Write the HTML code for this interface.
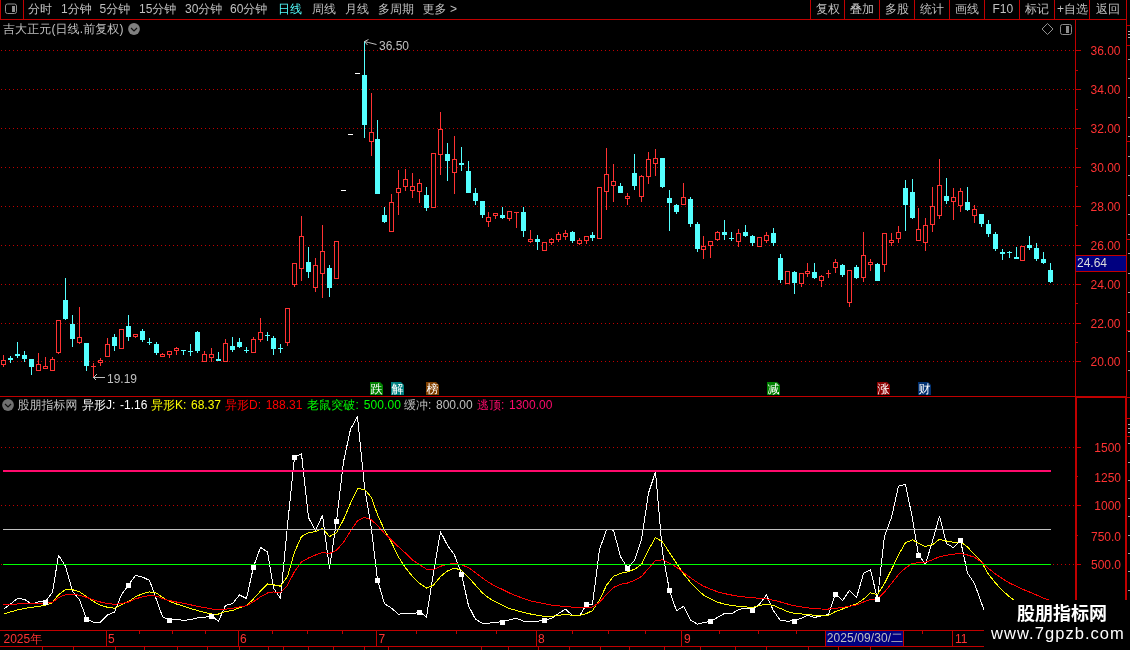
<!DOCTYPE html>
<html lang="zh-CN"><head><meta charset="utf-8"><title>吉大正元 日线</title>
<style>
html,body{margin:0;padding:0;background:#000;}
body{width:1130px;height:650px;overflow:hidden;position:relative;font-family:"Liberation Sans","Noto Sans CJK SC",sans-serif;font-size:12px;}
svg{position:absolute;left:0;top:0;}
.t{position:absolute;white-space:nowrap;line-height:14px;height:14px;font-size:12px;font-family:"Liberation Sans","WenQuanYi Zen Hei",sans-serif;}
.tag{font-family:"Liberation Sans","WenQuanYi Zen Hei",sans-serif;position:absolute;width:13px;height:13px;line-height:15px;font-size:12px;color:#fff;text-align:center;overflow:hidden;}
.tag:after{content:"";position:absolute;right:0;top:0;border-left:3px solid transparent;border-top:3px solid #000;}
.wm{font-family:"Liberation Sans","Noto Sans CJK SC",sans-serif;position:absolute;left:984px;top:600px;width:146px;height:50px;background:#000;color:#fff;text-align:center;}
.wm b{position:absolute;left:0;width:146px;top:2px;font-size:18px;line-height:24px;font-weight:bold;padding-left:10px;box-sizing:border-box;}
.wm i{position:absolute;left:1px;width:146px;top:23px;font-style:normal;font-size:16.5px;line-height:20px;letter-spacing:1.05px;}
</style></head><body>
<svg width="1130" height="650" viewBox="0 0 1130 650" shape-rendering="crispEdges">
<line x1="1" y1="50.5" x2="1075" y2="50.5" stroke="#c00000" stroke-width="1" stroke-dasharray="1 3"/>
<line x1="1" y1="89.5" x2="1075" y2="89.5" stroke="#c00000" stroke-width="1" stroke-dasharray="1 3"/>
<line x1="1" y1="128.5" x2="1075" y2="128.5" stroke="#c00000" stroke-width="1" stroke-dasharray="1 3"/>
<line x1="1" y1="167.5" x2="1075" y2="167.5" stroke="#c00000" stroke-width="1" stroke-dasharray="1 3"/>
<line x1="1" y1="206.5" x2="1075" y2="206.5" stroke="#c00000" stroke-width="1" stroke-dasharray="1 3"/>
<line x1="1" y1="245.5" x2="1075" y2="245.5" stroke="#c00000" stroke-width="1" stroke-dasharray="1 3"/>
<line x1="1" y1="284.5" x2="1075" y2="284.5" stroke="#c00000" stroke-width="1" stroke-dasharray="1 3"/>
<line x1="1" y1="323.5" x2="1075" y2="323.5" stroke="#c00000" stroke-width="1" stroke-dasharray="1 3"/>
<line x1="1" y1="361.5" x2="1075" y2="361.5" stroke="#c00000" stroke-width="1" stroke-dasharray="1 3"/>
<line x1="1" y1="447.5" x2="1075" y2="447.5" stroke="#c00000" stroke-width="1" stroke-dasharray="1 3"/>
<line x1="1" y1="505.5" x2="1075" y2="505.5" stroke="#c00000" stroke-width="1" stroke-dasharray="1 3"/>
<line x1="1" y1="564.5" x2="1075" y2="564.5" stroke="#c00000" stroke-width="1" stroke-dasharray="1 3"/>
<rect x="0" y="19" width="1127" height="1" fill="#c00000"/>
<rect x="0" y="0" width="1" height="20" fill="#c00000"/>
<rect x="23" y="0" width="1" height="20" fill="#c00000"/>
<rect x="810" y="0" width="1" height="20" fill="#c00000"/>
<rect x="844" y="0" width="1" height="20" fill="#c00000"/>
<rect x="879" y="0" width="1" height="20" fill="#c00000"/>
<rect x="914" y="0" width="1" height="20" fill="#c00000"/>
<rect x="949" y="0" width="1" height="20" fill="#c00000"/>
<rect x="984" y="0" width="1" height="20" fill="#c00000"/>
<rect x="1019" y="0" width="1" height="20" fill="#c00000"/>
<rect x="1054" y="0" width="1" height="20" fill="#c00000"/>
<rect x="1089" y="0" width="1" height="20" fill="#c00000"/>
<rect x="1126" y="0" width="1" height="397" fill="#c00000"/>
<rect x="1075" y="20" width="1" height="377" fill="#c00000"/>
<rect x="0" y="396" width="1127" height="1" fill="#c00000"/>
<rect x="1075" y="397" width="52" height="1" fill="#c00000"/>
<rect x="1075" y="396" width="2" height="235" fill="#c00000"/>
<rect x="1125" y="396" width="2" height="235" fill="#c00000"/>
<rect x="0" y="630" width="1127" height="1" fill="#c00000"/>
<rect x="0" y="646" width="1127" height="1" fill="#c00000"/>
<rect x="1127" y="25" width="3" height="1" fill="#c00000"/>
<rect x="1127" y="45" width="3" height="1" fill="#c00000"/>
<rect x="1127" y="141" width="3" height="1" fill="#c00000"/>
<rect x="1127" y="239" width="3" height="1" fill="#c00000"/>
<rect x="1127" y="330" width="3" height="1" fill="#c00000"/>
<rect x="1127" y="397" width="3" height="1" fill="#c00000"/>
<rect x="1127" y="418" width="3" height="1" fill="#c00000"/>
<rect x="1127" y="436" width="3" height="1" fill="#c00000"/>
<rect x="1128" y="31" width="2" height="1" fill="#b0b0b0"/>
<rect x="1128" y="34" width="2" height="1" fill="#b0b0b0"/>
<rect x="1128" y="37" width="2" height="1" fill="#b0b0b0"/>
<rect x="1128" y="59" width="2" height="1" fill="#a0a0a0"/>
<rect x="1128" y="78" width="2" height="1" fill="#a0a0a0"/>
<rect x="1128" y="97" width="2" height="1" fill="#a0a0a0"/>
<rect x="1128" y="117" width="2" height="1" fill="#a0a0a0"/>
<rect x="1128" y="136" width="2" height="1" fill="#a0a0a0"/>
<rect x="1128" y="156" width="2" height="1" fill="#a0a0a0"/>
<rect x="1128" y="175" width="2" height="1" fill="#a0a0a0"/>
<rect x="1128" y="195" width="2" height="1" fill="#a0a0a0"/>
<rect x="1128" y="214" width="2" height="1" fill="#a0a0a0"/>
<rect x="1128" y="234" width="2" height="1" fill="#a0a0a0"/>
<rect x="1128" y="253" width="2" height="1" fill="#a0a0a0"/>
<rect x="1128" y="273" width="2" height="1" fill="#a0a0a0"/>
<rect x="1128" y="292" width="2" height="1" fill="#a0a0a0"/>
<rect x="1128" y="312" width="2" height="1" fill="#a0a0a0"/>
<rect x="1128" y="331" width="2" height="1" fill="#a0a0a0"/>
<rect x="1128" y="351" width="2" height="1" fill="#a0a0a0"/>
<rect x="1128" y="370" width="2" height="1" fill="#a0a0a0"/>
<rect x="1128" y="424" width="2" height="1" fill="#b0b0b0"/>
<rect x="1128" y="428" width="2" height="1" fill="#b0b0b0"/>
<rect x="1128" y="432" width="2" height="1" fill="#b0b0b0"/>
<rect x="1128" y="443" width="2" height="1" fill="#a0a0a0"/>
<rect x="1128" y="462" width="2" height="1" fill="#a0a0a0"/>
<rect x="1128" y="480" width="2" height="1" fill="#a0a0a0"/>
<rect x="1128" y="498" width="2" height="1" fill="#a0a0a0"/>
<rect x="1128" y="516" width="2" height="1" fill="#a0a0a0"/>
<rect x="1128" y="535" width="2" height="1" fill="#a0a0a0"/>
<rect x="1128" y="553" width="2" height="1" fill="#a0a0a0"/>
<rect x="1128" y="571" width="2" height="1" fill="#a0a0a0"/>
<rect x="1128" y="590" width="2" height="1" fill="#a0a0a0"/>
<rect x="1076" y="50" width="5" height="1" fill="#c00000"/>
<rect x="1076" y="70" width="2" height="1" fill="#c00000"/>
<rect x="1076" y="89" width="5" height="1" fill="#c00000"/>
<rect x="1076" y="109" width="2" height="1" fill="#c00000"/>
<rect x="1076" y="128" width="5" height="1" fill="#c00000"/>
<rect x="1076" y="148" width="2" height="1" fill="#c00000"/>
<rect x="1076" y="167" width="5" height="1" fill="#c00000"/>
<rect x="1076" y="186" width="2" height="1" fill="#c00000"/>
<rect x="1076" y="206" width="5" height="1" fill="#c00000"/>
<rect x="1076" y="225" width="2" height="1" fill="#c00000"/>
<rect x="1076" y="245" width="5" height="1" fill="#c00000"/>
<rect x="1076" y="264" width="2" height="1" fill="#c00000"/>
<rect x="1076" y="284" width="5" height="1" fill="#c00000"/>
<rect x="1076" y="303" width="2" height="1" fill="#c00000"/>
<rect x="1076" y="323" width="5" height="1" fill="#c00000"/>
<rect x="1076" y="342" width="2" height="1" fill="#c00000"/>
<rect x="1076" y="361" width="5" height="1" fill="#c00000"/>
<rect x="1077" y="564" width="4" height="1" fill="#c00000"/>
<rect x="1077" y="535" width="1" height="1" fill="#c00000"/>
<rect x="1077" y="505" width="4" height="1" fill="#c00000"/>
<rect x="1077" y="476" width="1" height="1" fill="#c00000"/>
<rect x="1077" y="447" width="4" height="1" fill="#c00000"/>
<rect x="106" y="630" width="1" height="17" fill="#c00000"/>
<rect x="238" y="630" width="1" height="17" fill="#c00000"/>
<rect x="376" y="630" width="1" height="17" fill="#c00000"/>
<rect x="536" y="630" width="1" height="17" fill="#c00000"/>
<rect x="681" y="630" width="1" height="17" fill="#c00000"/>
<rect x="834" y="630" width="1" height="17" fill="#c00000"/>
<rect x="952" y="630" width="1" height="17" fill="#c00000"/>
<rect x="139" y="630" width="1" height="4" fill="#c00000"/>
<rect x="172" y="630" width="1" height="4" fill="#c00000"/>
<rect x="205" y="630" width="1" height="4" fill="#c00000"/>
<rect x="272" y="630" width="1" height="4" fill="#c00000"/>
<rect x="307" y="630" width="1" height="4" fill="#c00000"/>
<rect x="342" y="630" width="1" height="4" fill="#c00000"/>
<rect x="416" y="630" width="1" height="4" fill="#c00000"/>
<rect x="456" y="630" width="1" height="4" fill="#c00000"/>
<rect x="496" y="630" width="1" height="4" fill="#c00000"/>
<rect x="572" y="630" width="1" height="4" fill="#c00000"/>
<rect x="608" y="630" width="1" height="4" fill="#c00000"/>
<rect x="645" y="630" width="1" height="4" fill="#c00000"/>
<rect x="719" y="630" width="1" height="4" fill="#c00000"/>
<rect x="758" y="630" width="1" height="4" fill="#c00000"/>
<rect x="796" y="630" width="1" height="4" fill="#c00000"/>
<rect x="864" y="630" width="1" height="4" fill="#c00000"/>
<rect x="893" y="630" width="1" height="4" fill="#c00000"/>
<rect x="922" y="630" width="1" height="4" fill="#c00000"/>
<rect x="42" y="646" width="1" height="4" fill="#c00000"/>
<rect x="73" y="646" width="1" height="4" fill="#c00000"/>
<rect x="115" y="646" width="1" height="4" fill="#c00000"/>
<rect x="144" y="646" width="1" height="4" fill="#c00000"/>
<rect x="177" y="646" width="1" height="4" fill="#c00000"/>
<rect x="207" y="646" width="1" height="4" fill="#c00000"/>
<rect x="239" y="646" width="1" height="4" fill="#c00000"/>
<rect x="268" y="646" width="1" height="4" fill="#c00000"/>
<rect x="283" y="646" width="1" height="4" fill="#c00000"/>
<rect x="308" y="646" width="1" height="4" fill="#c00000"/>
<rect x="333" y="646" width="1" height="4" fill="#c00000"/>
<rect x="364" y="646" width="1" height="4" fill="#c00000"/>
<rect x="388" y="646" width="1" height="4" fill="#c00000"/>
<rect x="481" y="646" width="1" height="4" fill="#c00000"/>
<rect x="508" y="646" width="1" height="4" fill="#c00000"/>
<rect x="538" y="646" width="1" height="4" fill="#c00000"/>
<rect x="569" y="646" width="1" height="4" fill="#c00000"/>
<rect x="600" y="646" width="1" height="4" fill="#c00000"/>
<rect x="629" y="646" width="1" height="4" fill="#c00000"/>
<rect x="664" y="646" width="1" height="4" fill="#c00000"/>
<rect x="700" y="646" width="1" height="4" fill="#c00000"/>
<rect x="735" y="646" width="1" height="4" fill="#c00000"/>
<rect x="766" y="646" width="1" height="4" fill="#c00000"/>
<rect x="808" y="646" width="1" height="4" fill="#c00000"/>
<rect x="838" y="646" width="1" height="4" fill="#c00000"/>
<rect x="870" y="646" width="1" height="4" fill="#c00000"/>
<rect x="3" y="355" width="1" height="5" fill="#ff3232"/>
<rect x="3" y="365" width="1" height="2" fill="#ff3232"/>
<rect x="1.5" y="360.5" width="4" height="4" fill="#000" stroke="#ff3232" stroke-width="1"/>
<rect x="10" y="356" width="1" height="7" fill="#54ffff"/>
<rect x="8" y="358" width="5" height="2" fill="#54ffff"/>
<rect x="17" y="342" width="1" height="16" fill="#54ffff"/>
<rect x="15" y="354" width="5" height="2" fill="#54ffff"/>
<rect x="24" y="351" width="1" height="11" fill="#54ffff"/>
<rect x="22" y="355" width="5" height="4" fill="#54ffff"/>
<rect x="31" y="359" width="1" height="16" fill="#54ffff"/>
<rect x="29" y="359" width="5" height="8" fill="#54ffff"/>
<rect x="38" y="353" width="1" height="11" fill="#ff3232"/>
<rect x="36.5" y="364.5" width="4" height="6" fill="#000" stroke="#ff3232" stroke-width="1"/>
<rect x="45" y="357" width="1" height="9" fill="#ff3232"/>
<rect x="43.5" y="366.5" width="4" height="2" fill="#000" stroke="#ff3232" stroke-width="1"/>
<rect x="52" y="357" width="1" height="2" fill="#ff3232"/>
<rect x="50.5" y="359.5" width="4" height="11" fill="#000" stroke="#ff3232" stroke-width="1"/>
<rect x="58" y="353" width="1" height="1" fill="#ff3232"/>
<rect x="56.5" y="320.5" width="4" height="32" fill="#000" stroke="#ff3232" stroke-width="1"/>
<rect x="65" y="278" width="1" height="42" fill="#54ffff"/>
<rect x="63" y="300" width="5" height="19" fill="#54ffff"/>
<rect x="72" y="315" width="1" height="32" fill="#54ffff"/>
<rect x="70" y="324" width="5" height="15" fill="#54ffff"/>
<rect x="79" y="307" width="1" height="30" fill="#ff3232"/>
<rect x="79" y="343" width="1" height="1" fill="#ff3232"/>
<rect x="77.5" y="337.5" width="4" height="5" fill="#000" stroke="#ff3232" stroke-width="1"/>
<rect x="86" y="343" width="1" height="28" fill="#54ffff"/>
<rect x="84" y="343" width="5" height="23" fill="#54ffff"/>
<rect x="93" y="363" width="1" height="3" fill="#ff3232"/>
<rect x="93" y="367" width="1" height="10" fill="#ff3232"/>
<rect x="91" y="366" width="5" height="1" fill="#ff3232"/>
<rect x="100" y="358" width="1" height="2" fill="#ff3232"/>
<rect x="100" y="363" width="1" height="3" fill="#ff3232"/>
<rect x="98.5" y="360.5" width="4" height="2" fill="#000" stroke="#ff3232" stroke-width="1"/>
<rect x="107" y="338" width="1" height="6" fill="#ff3232"/>
<rect x="105.5" y="344.5" width="4" height="12" fill="#000" stroke="#ff3232" stroke-width="1"/>
<rect x="114" y="334" width="1" height="17" fill="#54ffff"/>
<rect x="112" y="337" width="5" height="9" fill="#54ffff"/>
<rect x="119.5" y="329.5" width="4" height="19" fill="#000" stroke="#ff3232" stroke-width="1"/>
<rect x="128" y="315" width="1" height="26" fill="#54ffff"/>
<rect x="126" y="326" width="5" height="11" fill="#54ffff"/>
<rect x="135" y="337" width="1" height="1" fill="#ff3232"/>
<rect x="133.5" y="334.5" width="4" height="2" fill="#000" stroke="#ff3232" stroke-width="1"/>
<rect x="142" y="329" width="1" height="13" fill="#54ffff"/>
<rect x="140" y="331" width="5" height="9" fill="#54ffff"/>
<rect x="149" y="338" width="1" height="7" fill="#54ffff"/>
<rect x="147" y="342" width="5" height="1" fill="#54ffff"/>
<rect x="156" y="342" width="1" height="13" fill="#54ffff"/>
<rect x="154" y="344" width="5" height="9" fill="#54ffff"/>
<rect x="162" y="353" width="1" height="1" fill="#ff3232"/>
<rect x="160.5" y="354.5" width="4" height="2" fill="#000" stroke="#ff3232" stroke-width="1"/>
<rect x="169" y="355" width="1" height="3" fill="#ff3232"/>
<rect x="167.5" y="351.5" width="4" height="3" fill="#000" stroke="#ff3232" stroke-width="1"/>
<rect x="176" y="347" width="1" height="1" fill="#ff3232"/>
<rect x="176" y="351" width="1" height="4" fill="#ff3232"/>
<rect x="174.5" y="348.5" width="4" height="2" fill="#000" stroke="#ff3232" stroke-width="1"/>
<rect x="183" y="350" width="1" height="5" fill="#54ffff"/>
<rect x="181" y="350" width="5" height="1" fill="#54ffff"/>
<rect x="190" y="344" width="1" height="12" fill="#54ffff"/>
<rect x="188" y="351" width="5" height="1" fill="#54ffff"/>
<rect x="197" y="331" width="1" height="22" fill="#54ffff"/>
<rect x="195" y="332" width="5" height="19" fill="#54ffff"/>
<rect x="204" y="351" width="1" height="3" fill="#ff3232"/>
<rect x="202.5" y="354.5" width="4" height="7" fill="#000" stroke="#ff3232" stroke-width="1"/>
<rect x="211" y="348" width="1" height="6" fill="#ff3232"/>
<rect x="211" y="358" width="1" height="4" fill="#ff3232"/>
<rect x="209.5" y="354.5" width="4" height="3" fill="#000" stroke="#ff3232" stroke-width="1"/>
<rect x="218" y="352" width="1" height="9" fill="#54ffff"/>
<rect x="216" y="359" width="5" height="2" fill="#54ffff"/>
<rect x="225" y="339" width="1" height="4" fill="#ff3232"/>
<rect x="223.5" y="343.5" width="4" height="18" fill="#000" stroke="#ff3232" stroke-width="1"/>
<rect x="232" y="337" width="1" height="15" fill="#54ffff"/>
<rect x="230" y="346" width="5" height="4" fill="#54ffff"/>
<rect x="239" y="338" width="1" height="10" fill="#54ffff"/>
<rect x="237" y="342" width="5" height="5" fill="#54ffff"/>
<rect x="246" y="347" width="1" height="6" fill="#54ffff"/>
<rect x="244" y="350" width="5" height="1" fill="#54ffff"/>
<rect x="253" y="337" width="1" height="2" fill="#ff3232"/>
<rect x="251.5" y="339.5" width="4" height="13" fill="#000" stroke="#ff3232" stroke-width="1"/>
<rect x="260" y="318" width="1" height="14" fill="#ff3232"/>
<rect x="260" y="340" width="1" height="2" fill="#ff3232"/>
<rect x="258.5" y="332.5" width="4" height="7" fill="#000" stroke="#ff3232" stroke-width="1"/>
<rect x="267" y="332" width="1" height="9" fill="#54ffff"/>
<rect x="265" y="335" width="5" height="1" fill="#54ffff"/>
<rect x="273" y="336" width="1" height="19" fill="#54ffff"/>
<rect x="271" y="338" width="5" height="11" fill="#54ffff"/>
<rect x="280" y="344" width="1" height="9" fill="#54ffff"/>
<rect x="278" y="348" width="5" height="1" fill="#54ffff"/>
<rect x="287" y="343" width="1" height="3" fill="#ff3232"/>
<rect x="285.5" y="308.5" width="4" height="34" fill="#000" stroke="#ff3232" stroke-width="1"/>
<rect x="294" y="285" width="1" height="2" fill="#ff3232"/>
<rect x="292.5" y="263.5" width="4" height="21" fill="#000" stroke="#ff3232" stroke-width="1"/>
<rect x="301" y="216" width="1" height="20" fill="#ff3232"/>
<rect x="301" y="269" width="1" height="12" fill="#ff3232"/>
<rect x="299.5" y="236.5" width="4" height="32" fill="#000" stroke="#ff3232" stroke-width="1"/>
<rect x="308" y="247" width="1" height="31" fill="#54ffff"/>
<rect x="306" y="262" width="5" height="10" fill="#54ffff"/>
<rect x="315" y="258" width="1" height="7" fill="#ff3232"/>
<rect x="315" y="288" width="1" height="4" fill="#ff3232"/>
<rect x="313.5" y="265.5" width="4" height="22" fill="#000" stroke="#ff3232" stroke-width="1"/>
<rect x="322" y="225" width="1" height="26" fill="#ff3232"/>
<rect x="322" y="274" width="1" height="24" fill="#ff3232"/>
<rect x="320.5" y="251.5" width="4" height="22" fill="#000" stroke="#ff3232" stroke-width="1"/>
<rect x="329" y="265" width="1" height="32" fill="#54ffff"/>
<rect x="327" y="268" width="5" height="20" fill="#54ffff"/>
<rect x="334.5" y="241.5" width="4" height="37" fill="#000" stroke="#ff3232" stroke-width="1"/>
<rect x="364" y="41" width="1" height="97" fill="#54ffff"/>
<rect x="362" y="75" width="5" height="50" fill="#54ffff"/>
<rect x="371" y="93" width="1" height="39" fill="#ff3232"/>
<rect x="371" y="142" width="1" height="14" fill="#ff3232"/>
<rect x="369.5" y="132.5" width="4" height="9" fill="#000" stroke="#ff3232" stroke-width="1"/>
<rect x="377" y="120" width="1" height="74" fill="#54ffff"/>
<rect x="375" y="139" width="5" height="55" fill="#54ffff"/>
<rect x="384" y="207" width="1" height="16" fill="#54ffff"/>
<rect x="382" y="215" width="5" height="7" fill="#54ffff"/>
<rect x="391" y="194" width="1" height="8" fill="#ff3232"/>
<rect x="389.5" y="202.5" width="4" height="29" fill="#000" stroke="#ff3232" stroke-width="1"/>
<rect x="398" y="170" width="1" height="18" fill="#ff3232"/>
<rect x="398" y="193" width="1" height="22" fill="#ff3232"/>
<rect x="396.5" y="188.5" width="4" height="4" fill="#000" stroke="#ff3232" stroke-width="1"/>
<rect x="405" y="169" width="1" height="10" fill="#ff3232"/>
<rect x="405" y="187" width="1" height="4" fill="#ff3232"/>
<rect x="403.5" y="179.5" width="4" height="7" fill="#000" stroke="#ff3232" stroke-width="1"/>
<rect x="412" y="173" width="1" height="13" fill="#ff3232"/>
<rect x="412" y="191" width="1" height="7" fill="#ff3232"/>
<rect x="410.5" y="186.5" width="4" height="4" fill="#000" stroke="#ff3232" stroke-width="1"/>
<rect x="419" y="179" width="1" height="4" fill="#ff3232"/>
<rect x="419" y="192" width="1" height="11" fill="#ff3232"/>
<rect x="417.5" y="183.5" width="4" height="8" fill="#000" stroke="#ff3232" stroke-width="1"/>
<rect x="426" y="187" width="1" height="24" fill="#54ffff"/>
<rect x="424" y="195" width="5" height="13" fill="#54ffff"/>
<rect x="431.5" y="153.5" width="4" height="54" fill="#000" stroke="#ff3232" stroke-width="1"/>
<rect x="440" y="112" width="1" height="17" fill="#ff3232"/>
<rect x="440" y="155" width="1" height="20" fill="#ff3232"/>
<rect x="438.5" y="129.5" width="4" height="25" fill="#000" stroke="#ff3232" stroke-width="1"/>
<rect x="447" y="143" width="1" height="38" fill="#54ffff"/>
<rect x="445" y="154" width="5" height="7" fill="#54ffff"/>
<rect x="454" y="136" width="1" height="23" fill="#ff3232"/>
<rect x="454" y="173" width="1" height="21" fill="#ff3232"/>
<rect x="452.5" y="159.5" width="4" height="13" fill="#000" stroke="#ff3232" stroke-width="1"/>
<rect x="461" y="147" width="1" height="24" fill="#54ffff"/>
<rect x="459" y="163" width="5" height="2" fill="#54ffff"/>
<rect x="468" y="161" width="1" height="32" fill="#54ffff"/>
<rect x="466" y="171" width="5" height="22" fill="#54ffff"/>
<rect x="475" y="188" width="1" height="17" fill="#54ffff"/>
<rect x="473" y="193" width="5" height="8" fill="#54ffff"/>
<rect x="482" y="201" width="1" height="17" fill="#54ffff"/>
<rect x="480" y="201" width="5" height="14" fill="#54ffff"/>
<rect x="488" y="212" width="1" height="5" fill="#ff3232"/>
<rect x="488" y="222" width="1" height="5" fill="#ff3232"/>
<rect x="486.5" y="217.5" width="4" height="4" fill="#000" stroke="#ff3232" stroke-width="1"/>
<rect x="495" y="216" width="1" height="3" fill="#ff3232"/>
<rect x="493.5" y="213.5" width="4" height="2" fill="#000" stroke="#ff3232" stroke-width="1"/>
<rect x="502" y="207" width="1" height="12" fill="#54ffff"/>
<rect x="500" y="215" width="5" height="3" fill="#54ffff"/>
<rect x="509" y="219" width="1" height="2" fill="#ff3232"/>
<rect x="507.5" y="211.5" width="4" height="7" fill="#000" stroke="#ff3232" stroke-width="1"/>
<rect x="516" y="213" width="1" height="15" fill="#ff3232"/>
<rect x="514" y="212" width="5" height="1" fill="#ff3232"/>
<rect x="523" y="207" width="1" height="30" fill="#54ffff"/>
<rect x="521" y="212" width="5" height="19" fill="#54ffff"/>
<rect x="530" y="230" width="1" height="9" fill="#ff3232"/>
<rect x="530" y="242" width="1" height="1" fill="#ff3232"/>
<rect x="528.5" y="239.5" width="4" height="2" fill="#000" stroke="#ff3232" stroke-width="1"/>
<rect x="537" y="235" width="1" height="15" fill="#54ffff"/>
<rect x="535" y="239" width="5" height="3" fill="#54ffff"/>
<rect x="542.5" y="242.5" width="4" height="8" fill="#000" stroke="#ff3232" stroke-width="1"/>
<rect x="551" y="238" width="1" height="1" fill="#ff3232"/>
<rect x="551" y="243" width="1" height="2" fill="#ff3232"/>
<rect x="549.5" y="239.5" width="4" height="3" fill="#000" stroke="#ff3232" stroke-width="1"/>
<rect x="558" y="232" width="1" height="2" fill="#ff3232"/>
<rect x="558" y="240" width="1" height="2" fill="#ff3232"/>
<rect x="556.5" y="234.5" width="4" height="5" fill="#000" stroke="#ff3232" stroke-width="1"/>
<rect x="565" y="230" width="1" height="3" fill="#ff3232"/>
<rect x="565" y="237" width="1" height="3" fill="#ff3232"/>
<rect x="563.5" y="233.5" width="4" height="3" fill="#000" stroke="#ff3232" stroke-width="1"/>
<rect x="572" y="231" width="1" height="12" fill="#54ffff"/>
<rect x="570" y="232" width="5" height="9" fill="#54ffff"/>
<rect x="579" y="238" width="1" height="2" fill="#ff3232"/>
<rect x="579" y="244" width="1" height="1" fill="#ff3232"/>
<rect x="577.5" y="240.5" width="4" height="3" fill="#000" stroke="#ff3232" stroke-width="1"/>
<rect x="586" y="241" width="1" height="3" fill="#ff3232"/>
<rect x="584.5" y="236.5" width="4" height="4" fill="#000" stroke="#ff3232" stroke-width="1"/>
<rect x="592" y="232" width="1" height="9" fill="#54ffff"/>
<rect x="590" y="235" width="5" height="3" fill="#54ffff"/>
<rect x="597.5" y="187.5" width="4" height="51" fill="#000" stroke="#ff3232" stroke-width="1"/>
<rect x="606" y="148" width="1" height="26" fill="#ff3232"/>
<rect x="606" y="192" width="1" height="18" fill="#ff3232"/>
<rect x="604.5" y="174.5" width="4" height="17" fill="#000" stroke="#ff3232" stroke-width="1"/>
<rect x="613" y="164" width="1" height="17" fill="#ff3232"/>
<rect x="613" y="186" width="1" height="16" fill="#ff3232"/>
<rect x="611.5" y="181.5" width="4" height="4" fill="#000" stroke="#ff3232" stroke-width="1"/>
<rect x="620" y="183" width="1" height="10" fill="#54ffff"/>
<rect x="618" y="186" width="5" height="7" fill="#54ffff"/>
<rect x="627" y="193" width="1" height="3" fill="#ff3232"/>
<rect x="627" y="199" width="1" height="6" fill="#ff3232"/>
<rect x="625.5" y="196.5" width="4" height="2" fill="#000" stroke="#ff3232" stroke-width="1"/>
<rect x="634" y="154" width="1" height="36" fill="#54ffff"/>
<rect x="632" y="173" width="5" height="13" fill="#54ffff"/>
<rect x="641" y="175" width="1" height="1" fill="#ff3232"/>
<rect x="641" y="197" width="1" height="5" fill="#ff3232"/>
<rect x="639.5" y="176.5" width="4" height="20" fill="#000" stroke="#ff3232" stroke-width="1"/>
<rect x="648" y="152" width="1" height="7" fill="#ff3232"/>
<rect x="648" y="177" width="1" height="7" fill="#ff3232"/>
<rect x="646.5" y="159.5" width="4" height="17" fill="#000" stroke="#ff3232" stroke-width="1"/>
<rect x="655" y="149" width="1" height="9" fill="#ff3232"/>
<rect x="655" y="164" width="1" height="12" fill="#ff3232"/>
<rect x="653.5" y="158.5" width="4" height="5" fill="#000" stroke="#ff3232" stroke-width="1"/>
<rect x="662" y="158" width="1" height="30" fill="#54ffff"/>
<rect x="660" y="158" width="5" height="29" fill="#54ffff"/>
<rect x="669" y="190" width="1" height="41" fill="#54ffff"/>
<rect x="667" y="198" width="5" height="5" fill="#54ffff"/>
<rect x="676" y="204" width="1" height="10" fill="#54ffff"/>
<rect x="674" y="205" width="5" height="7" fill="#54ffff"/>
<rect x="683" y="183" width="1" height="14" fill="#ff3232"/>
<rect x="681.5" y="197.5" width="4" height="7" fill="#000" stroke="#ff3232" stroke-width="1"/>
<rect x="690" y="197" width="1" height="30" fill="#54ffff"/>
<rect x="688" y="199" width="5" height="25" fill="#54ffff"/>
<rect x="697" y="222" width="1" height="30" fill="#54ffff"/>
<rect x="695" y="224" width="5" height="25" fill="#54ffff"/>
<rect x="703" y="236" width="1" height="10" fill="#ff3232"/>
<rect x="703" y="250" width="1" height="9" fill="#ff3232"/>
<rect x="701.5" y="246.5" width="4" height="3" fill="#000" stroke="#ff3232" stroke-width="1"/>
<rect x="710" y="246" width="1" height="12" fill="#ff3232"/>
<rect x="708.5" y="241.5" width="4" height="4" fill="#000" stroke="#ff3232" stroke-width="1"/>
<rect x="717" y="231" width="1" height="1" fill="#ff3232"/>
<rect x="717" y="240" width="1" height="1" fill="#ff3232"/>
<rect x="715.5" y="232.5" width="4" height="7" fill="#000" stroke="#ff3232" stroke-width="1"/>
<rect x="724" y="220" width="1" height="20" fill="#54ffff"/>
<rect x="722" y="232" width="5" height="3" fill="#54ffff"/>
<rect x="731" y="232" width="1" height="9" fill="#54ffff"/>
<rect x="729" y="238" width="5" height="1" fill="#54ffff"/>
<rect x="738" y="229" width="1" height="4" fill="#ff3232"/>
<rect x="738" y="242" width="1" height="5" fill="#ff3232"/>
<rect x="736.5" y="233.5" width="4" height="8" fill="#000" stroke="#ff3232" stroke-width="1"/>
<rect x="745" y="225" width="1" height="12" fill="#54ffff"/>
<rect x="743" y="232" width="5" height="4" fill="#54ffff"/>
<rect x="752" y="235" width="1" height="11" fill="#54ffff"/>
<rect x="750" y="236" width="5" height="7" fill="#54ffff"/>
<rect x="757.5" y="237.5" width="4" height="9" fill="#000" stroke="#ff3232" stroke-width="1"/>
<rect x="766" y="232" width="1" height="3" fill="#ff3232"/>
<rect x="766" y="241" width="1" height="2" fill="#ff3232"/>
<rect x="764.5" y="235.5" width="4" height="5" fill="#000" stroke="#ff3232" stroke-width="1"/>
<rect x="773" y="228" width="1" height="18" fill="#54ffff"/>
<rect x="771" y="233" width="5" height="10" fill="#54ffff"/>
<rect x="780" y="254" width="1" height="29" fill="#54ffff"/>
<rect x="778" y="258" width="5" height="22" fill="#54ffff"/>
<rect x="785.5" y="271.5" width="4" height="12" fill="#000" stroke="#ff3232" stroke-width="1"/>
<rect x="794" y="271" width="1" height="23" fill="#54ffff"/>
<rect x="792" y="272" width="5" height="11" fill="#54ffff"/>
<rect x="801" y="284" width="1" height="3" fill="#ff3232"/>
<rect x="799.5" y="273.5" width="4" height="10" fill="#000" stroke="#ff3232" stroke-width="1"/>
<rect x="807" y="263" width="1" height="8" fill="#ff3232"/>
<rect x="807" y="274" width="1" height="3" fill="#ff3232"/>
<rect x="805.5" y="271.5" width="4" height="2" fill="#000" stroke="#ff3232" stroke-width="1"/>
<rect x="814" y="263" width="1" height="16" fill="#54ffff"/>
<rect x="812" y="272" width="5" height="6" fill="#54ffff"/>
<rect x="821" y="275" width="1" height="1" fill="#ff3232"/>
<rect x="821" y="281" width="1" height="6" fill="#ff3232"/>
<rect x="819.5" y="276.5" width="4" height="4" fill="#000" stroke="#ff3232" stroke-width="1"/>
<rect x="828" y="270" width="1" height="3" fill="#ff3232"/>
<rect x="828" y="274" width="1" height="4" fill="#ff3232"/>
<rect x="826" y="273" width="5" height="1" fill="#ff3232"/>
<rect x="835" y="259" width="1" height="3" fill="#ff3232"/>
<rect x="835" y="268" width="1" height="5" fill="#ff3232"/>
<rect x="833.5" y="262.5" width="4" height="5" fill="#000" stroke="#ff3232" stroke-width="1"/>
<rect x="842" y="264" width="1" height="13" fill="#54ffff"/>
<rect x="840" y="265" width="5" height="10" fill="#54ffff"/>
<rect x="849" y="303" width="1" height="4" fill="#ff3232"/>
<rect x="847.5" y="270.5" width="4" height="32" fill="#000" stroke="#ff3232" stroke-width="1"/>
<rect x="856" y="265" width="1" height="14" fill="#54ffff"/>
<rect x="854" y="267" width="5" height="11" fill="#54ffff"/>
<rect x="863" y="232" width="1" height="23" fill="#ff3232"/>
<rect x="863" y="278" width="1" height="4" fill="#ff3232"/>
<rect x="861.5" y="255.5" width="4" height="22" fill="#000" stroke="#ff3232" stroke-width="1"/>
<rect x="870" y="259" width="1" height="3" fill="#ff3232"/>
<rect x="870" y="265" width="1" height="6" fill="#ff3232"/>
<rect x="868.5" y="262.5" width="4" height="2" fill="#000" stroke="#ff3232" stroke-width="1"/>
<rect x="877" y="263" width="1" height="18" fill="#54ffff"/>
<rect x="875" y="264" width="5" height="17" fill="#54ffff"/>
<rect x="884" y="265" width="1" height="7" fill="#ff3232"/>
<rect x="882.5" y="233.5" width="4" height="31" fill="#000" stroke="#ff3232" stroke-width="1"/>
<rect x="891" y="233" width="1" height="7" fill="#ff3232"/>
<rect x="891" y="243" width="1" height="3" fill="#ff3232"/>
<rect x="889.5" y="240.5" width="4" height="2" fill="#000" stroke="#ff3232" stroke-width="1"/>
<rect x="898" y="226" width="1" height="6" fill="#ff3232"/>
<rect x="898" y="239" width="1" height="4" fill="#ff3232"/>
<rect x="896.5" y="232.5" width="4" height="6" fill="#000" stroke="#ff3232" stroke-width="1"/>
<rect x="905" y="180" width="1" height="51" fill="#54ffff"/>
<rect x="903" y="188" width="5" height="17" fill="#54ffff"/>
<rect x="912" y="179" width="1" height="40" fill="#54ffff"/>
<rect x="910" y="192" width="5" height="26" fill="#54ffff"/>
<rect x="918" y="208" width="1" height="21" fill="#ff3232"/>
<rect x="916.5" y="229.5" width="4" height="11" fill="#000" stroke="#ff3232" stroke-width="1"/>
<rect x="925" y="218" width="1" height="7" fill="#ff3232"/>
<rect x="925" y="243" width="1" height="8" fill="#ff3232"/>
<rect x="923.5" y="225.5" width="4" height="17" fill="#000" stroke="#ff3232" stroke-width="1"/>
<rect x="932" y="187" width="1" height="19" fill="#ff3232"/>
<rect x="932" y="225" width="1" height="7" fill="#ff3232"/>
<rect x="930.5" y="206.5" width="4" height="18" fill="#000" stroke="#ff3232" stroke-width="1"/>
<rect x="939" y="159" width="1" height="26" fill="#ff3232"/>
<rect x="939" y="216" width="1" height="3" fill="#ff3232"/>
<rect x="937.5" y="185.5" width="4" height="30" fill="#000" stroke="#ff3232" stroke-width="1"/>
<rect x="946" y="178" width="1" height="26" fill="#54ffff"/>
<rect x="944" y="196" width="5" height="5" fill="#54ffff"/>
<rect x="953" y="188" width="1" height="9" fill="#ff3232"/>
<rect x="953" y="202" width="1" height="18" fill="#ff3232"/>
<rect x="951.5" y="197.5" width="4" height="4" fill="#000" stroke="#ff3232" stroke-width="1"/>
<rect x="960" y="188" width="1" height="3" fill="#ff3232"/>
<rect x="960" y="206" width="1" height="6" fill="#ff3232"/>
<rect x="958.5" y="191.5" width="4" height="14" fill="#000" stroke="#ff3232" stroke-width="1"/>
<rect x="967" y="187" width="1" height="24" fill="#54ffff"/>
<rect x="965" y="202" width="5" height="8" fill="#54ffff"/>
<rect x="974" y="205" width="1" height="4" fill="#ff3232"/>
<rect x="974" y="216" width="1" height="7" fill="#ff3232"/>
<rect x="972.5" y="209.5" width="4" height="6" fill="#000" stroke="#ff3232" stroke-width="1"/>
<rect x="981" y="214" width="1" height="13" fill="#54ffff"/>
<rect x="979" y="214" width="5" height="10" fill="#54ffff"/>
<rect x="988" y="220" width="1" height="17" fill="#54ffff"/>
<rect x="986" y="224" width="5" height="10" fill="#54ffff"/>
<rect x="995" y="232" width="1" height="19" fill="#54ffff"/>
<rect x="993" y="234" width="5" height="15" fill="#54ffff"/>
<rect x="1002" y="249" width="1" height="11" fill="#54ffff"/>
<rect x="1000" y="252" width="5" height="2" fill="#54ffff"/>
<rect x="1009" y="251" width="1" height="7" fill="#54ffff"/>
<rect x="1007" y="252" width="5" height="1" fill="#54ffff"/>
<rect x="1016" y="247" width="1" height="12" fill="#54ffff"/>
<rect x="1014" y="257" width="5" height="2" fill="#54ffff"/>
<rect x="1020.5" y="246.5" width="4" height="14" fill="#000" stroke="#ff3232" stroke-width="1"/>
<rect x="1029" y="236" width="1" height="14" fill="#54ffff"/>
<rect x="1027" y="245" width="5" height="3" fill="#54ffff"/>
<rect x="1036" y="243" width="1" height="18" fill="#54ffff"/>
<rect x="1034" y="248" width="5" height="11" fill="#54ffff"/>
<rect x="1043" y="252" width="1" height="12" fill="#54ffff"/>
<rect x="1041" y="259" width="5" height="4" fill="#54ffff"/>
<rect x="1050" y="263" width="1" height="20" fill="#54ffff"/>
<rect x="1048" y="270" width="5" height="12" fill="#54ffff"/>
<rect x="341" y="190" width="5" height="1" fill="#ffffff"/>
<rect x="348" y="134" width="5" height="1" fill="#ffffff"/>
<rect x="355" y="73" width="5" height="1" fill="#ffffff"/>
<path d="M364.5 41.5 L368.5 42.5 L376.5 44.5 M364.5 41.5 L368.5 39.5 M364.5 41.5 L367.5 45" stroke="#c0c0c0" stroke-width="1" fill="none" shape-rendering="auto"/>
<path d="M93.5 377.5 H105 M93.5 377.5 l3 -3 M93.5 377.5 l3 3" stroke="#c0c0c0" stroke-width="1" fill="none"/>
<polyline points="3.5,609.4 10.5,604.0 17.5,598.4 24.5,599.3 31.5,604.0 38.5,601.8 45.5,601.5 52.5,592.2 58.5,555.2 65.5,566.2 72.5,591.4 79.5,599.8 86.5,618.6 93.5,622.1 100.5,622.1 107.5,614.9 114.5,612.1 121.5,594.7 128.5,585.0 135.5,575.4 142.5,577.1 149.5,580.4 156.5,599.8 162.5,616.6 169.5,620.3 176.5,619.1 183.5,620.5 190.5,619.5 197.5,617.9 204.5,617.4 211.5,615.8 218.5,621.2 225.5,605.3 232.5,603.7 239.5,595.0 246.5,598.5 253.5,566.7 260.5,547.3 267.5,552.1 273.5,588.1 280.5,598.5 287.5,525.4 294.5,457.1 301.5,453.8 308.5,517.7 315.5,530.4 322.5,515.4 329.5,568.7 336.5,521.0 343.5,461.9 350.5,429.2 357.5,416.7 364.5,486.9 371.5,529.2 377.5,580.0 384.5,603.7 391.5,608.1 398.5,614.2 405.5,613.5 412.5,614.0 419.5,611.9 426.5,617.0 433.5,572.6 440.5,531.7 447.5,545.3 454.5,555.0 461.5,574.1 468.5,605.7 475.5,619.3 482.5,623.2 488.5,623.2 495.5,622.2 502.5,621.8 509.5,619.9 516.5,618.3 523.5,621.2 530.5,621.2 537.5,621.2 544.5,620.3 551.5,618.3 558.5,613.5 565.5,609.2 572.5,615.4 579.5,616.0 586.5,604.3 592.5,604.2 599.5,549.6 606.5,529.7 613.5,530.1 620.5,556.6 627.5,568.0 634.5,560.6 641.5,539.4 648.5,493.1 655.5,471.9 662.5,552.6 669.5,590.5 676.5,610.8 683.5,606.3 690.5,620.1 697.5,624.1 703.5,622.7 710.5,621.4 717.5,617.4 724.5,613.5 731.5,614.0 738.5,609.5 745.5,608.2 752.5,609.5 759.5,604.2 766.5,595.0 773.5,610.9 780.5,620.4 787.5,621.2 794.5,620.7 801.5,618.2 807.5,615.3 814.5,617.5 821.5,615.8 828.5,614.5 835.5,593.8 842.5,600.8 849.5,590.3 856.5,597.8 863.5,573.4 870.5,569.7 877.5,599.1 884.5,536.0 891.5,517.3 898.5,486.2 905.5,484.5 912.5,518.6 918.5,554.7 925.5,564.2 932.5,541.0 939.5,516.1 946.5,543.5 953.5,547.7 960.5,540.5 967.5,573.1 974.5,583.5 981.5,603.1 988.5,622.0" fill="none" stroke="#ffffff" stroke-width="1" stroke-linejoin="round"/>
<polyline points="3.5,614.1 10.5,611.9 17.5,609.9 24.5,608.5 31.5,607.3 38.5,606.5 45.5,605.3 52.5,602.6 58.5,594.7 65.5,589.7 72.5,589.7 79.5,591.9 86.5,596.4 93.5,601.5 100.5,605.3 107.5,607.3 114.5,608.2 121.5,604.8 128.5,601.5 135.5,596.9 142.5,593.6 149.5,591.9 156.5,593.1 162.5,597.3 169.5,601.5 176.5,604.0 183.5,606.1 190.5,608.7 197.5,610.5 204.5,612.5 211.5,614.0 218.5,614.0 225.5,611.5 232.5,610.5 239.5,607.6 246.5,605.7 253.5,598.9 260.5,591.1 267.5,583.9 273.5,584.8 280.5,586.2 287.5,576.5 294.5,552.1 301.5,536.5 308.5,532.7 315.5,531.7 322.5,528.2 329.5,536.5 336.5,532.8 343.5,519.6 350.5,503.3 357.5,488.8 364.5,489.2 371.5,497.5 377.5,514.8 384.5,530.0 391.5,542.4 398.5,557.0 405.5,567.7 412.5,576.5 419.5,583.3 426.5,588.1 433.5,585.2 440.5,576.5 447.5,571.0 454.5,568.1 461.5,570.2 468.5,577.4 475.5,585.2 482.5,593.0 488.5,597.9 495.5,601.8 502.5,605.3 509.5,608.6 516.5,610.5 523.5,612.5 530.5,614.0 537.5,615.4 544.5,616.4 551.5,616.4 558.5,615.4 565.5,614.4 572.5,615.4 579.5,615.4 586.5,613.5 592.5,610.6 599.5,600.0 606.5,585.3 613.5,576.4 620.5,573.3 627.5,571.9 634.5,569.3 641.5,564.5 648.5,550.0 655.5,537.5 662.5,542.0 669.5,552.6 676.5,563.2 683.5,573.8 690.5,582.3 697.5,589.7 703.5,595.0 710.5,598.9 717.5,602.1 724.5,604.2 731.5,605.5 738.5,606.3 745.5,606.9 752.5,607.4 759.5,605.5 766.5,604.2 773.5,605.4 780.5,608.5 787.5,611.5 794.5,613.3 801.5,614.0 807.5,614.5 814.5,615.3 821.5,615.8 828.5,615.3 835.5,611.5 842.5,609.0 849.5,606.3 856.5,604.0 863.5,599.1 870.5,592.8 877.5,594.6 884.5,583.4 891.5,569.7 898.5,554.7 905.5,542.8 912.5,539.8 918.5,543.5 925.5,546.5 932.5,544.7 939.5,539.3 946.5,541.0 953.5,542.3 960.5,541.8 967.5,547.1 974.5,554.4 981.5,562.2 988.5,574.3 995.5,583.0 1002.5,590.6 1009.5,596.8 1016.5,602.0" fill="none" stroke="#ffff00" stroke-width="1" stroke-linejoin="round"/>
<polyline points="3.5,604.3 10.5,604.2 17.5,604.0 24.5,603.6 31.5,603.5 38.5,603.3 45.5,603.1 52.5,602.3 58.5,597.6 65.5,594.7 72.5,594.4 79.5,595.2 86.5,597.3 93.5,599.8 100.5,602.0 107.5,603.5 114.5,604.3 121.5,603.5 128.5,602.0 135.5,598.9 142.5,596.8 149.5,595.6 156.5,596.1 162.5,598.6 169.5,600.6 176.5,602.0 183.5,603.4 190.5,604.8 197.5,606.3 204.5,607.6 211.5,609.0 218.5,609.6 225.5,609.2 232.5,608.2 239.5,607.0 246.5,605.7 253.5,601.8 260.5,596.9 267.5,593.0 273.5,592.0 280.5,592.4 287.5,585.2 294.5,571.6 301.5,561.9 308.5,558.0 315.5,555.0 322.5,552.5 329.5,553.5 336.5,550.2 343.5,542.4 350.5,531.0 357.5,520.8 364.5,517.3 371.5,520.0 377.5,525.6 384.5,533.3 391.5,540.0 398.5,546.8 405.5,553.1 412.5,559.9 419.5,564.8 426.5,569.1 433.5,569.6 440.5,566.3 447.5,564.4 454.5,563.2 461.5,564.8 468.5,567.7 475.5,572.6 482.5,578.0 488.5,582.3 495.5,586.2 502.5,589.5 509.5,593.0 516.5,595.9 523.5,598.5 530.5,600.8 537.5,602.4 544.5,603.7 551.5,605.1 558.5,605.9 565.5,606.3 572.5,607.2 579.5,608.0 586.5,607.6 592.5,607.0 599.5,602.4 606.5,594.3 613.5,587.5 620.5,584.4 627.5,583.0 634.5,580.4 641.5,576.4 648.5,568.5 655.5,560.6 662.5,559.8 669.5,563.2 676.5,567.2 683.5,572.5 690.5,577.8 697.5,582.5 703.5,586.2 710.5,589.1 717.5,591.8 724.5,593.6 731.5,595.0 738.5,596.3 745.5,597.1 752.5,597.6 759.5,598.4 766.5,598.9 773.5,600.2 780.5,602.0 787.5,604.0 794.5,605.8 801.5,607.0 807.5,607.8 814.5,608.8 821.5,609.0 828.5,609.0 835.5,608.3 842.5,607.5 849.5,606.3 856.5,605.0 863.5,602.0 870.5,599.6 877.5,599.1 884.5,592.1 891.5,583.4 898.5,574.6 905.5,567.9 912.5,563.4 918.5,562.7 925.5,562.2 932.5,559.7 939.5,556.7 946.5,555.2 953.5,554.2 960.5,553.5 967.5,555.0 974.5,557.3 981.5,562.2 988.5,568.4 995.5,574.0 1002.5,578.8 1009.5,583.0 1016.5,586.4 1022.5,589.2 1029.5,592.0 1036.5,595.0 1043.5,598.2 1050.5,600.5" fill="none" stroke="#ff0000" stroke-width="1" stroke-linejoin="round"/>
<rect x="3" y="470" width="1048" height="2" fill="#ff0a6c"/>
<rect x="3" y="529" width="1048" height="1" fill="#c0c0c0"/>
<rect x="3" y="564" width="1048" height="1" fill="#00ff00"/>
<rect x="43" y="600" width="5" height="5" fill="#ffffff"/>
<rect x="84" y="617" width="5" height="5" fill="#ffffff"/>
<rect x="126" y="583" width="5" height="5" fill="#ffffff"/>
<rect x="167" y="618" width="5" height="5" fill="#ffffff"/>
<rect x="209" y="614" width="5" height="5" fill="#ffffff"/>
<rect x="251" y="565" width="5" height="5" fill="#ffffff"/>
<rect x="292" y="455" width="5" height="5" fill="#ffffff"/>
<rect x="334" y="519" width="5" height="5" fill="#ffffff"/>
<rect x="375" y="578" width="5" height="5" fill="#ffffff"/>
<rect x="417" y="610" width="5" height="5" fill="#ffffff"/>
<rect x="459" y="572" width="5" height="5" fill="#ffffff"/>
<rect x="500" y="620" width="5" height="5" fill="#ffffff"/>
<rect x="542" y="618" width="5" height="5" fill="#ffffff"/>
<rect x="584" y="602" width="5" height="5" fill="#ffffff"/>
<rect x="625" y="566" width="5" height="5" fill="#ffffff"/>
<rect x="667" y="588" width="5" height="5" fill="#ffffff"/>
<rect x="708" y="619" width="5" height="5" fill="#ffffff"/>
<rect x="750" y="608" width="5" height="5" fill="#ffffff"/>
<rect x="792" y="619" width="5" height="5" fill="#ffffff"/>
<rect x="833" y="592" width="5" height="5" fill="#ffffff"/>
<rect x="875" y="597" width="5" height="5" fill="#ffffff"/>
<rect x="916" y="553" width="5" height="5" fill="#ffffff"/>
<rect x="958" y="538" width="5" height="5" fill="#ffffff"/>
<path d="M1047.5 23.5 l5.5 5.5 l-5.5 5.5 l-5.5 -5.5 z" fill="none" stroke="#909090" stroke-width="1" shape-rendering="auto"/>
<rect x="1060.5" y="24.5" width="11" height="10" rx="2" fill="none" stroke="#8c8c8c" stroke-width="1" shape-rendering="auto"/><rect x="1066" y="26" width="3" height="7" fill="#8c8c8c"/>
<rect x="5.5" y="4" width="11" height="9.5" rx="2" fill="none" stroke="#909090" stroke-width="1" shape-rendering="auto"/><rect x="12" y="6" width="3" height="6" fill="#909090"/>
<circle cx="134" cy="29" r="5.9" fill="#808080" shape-rendering="auto"/><path d="M131 28 l3 3 l3 -3" fill="none" stroke="#111" stroke-width="1.2" shape-rendering="auto"/>
<circle cx="8" cy="405" r="5.9" fill="#707070" shape-rendering="auto"/><path d="M5 404 l3 3 l3 -3" fill="none" stroke="#111" stroke-width="1.2" shape-rendering="auto"/>
<rect x="1076" y="255" width="50" height="17" fill="#c00000"/>
<rect x="1076" y="256" width="50" height="15" fill="#000080"/>
<rect x="826" y="631" width="77" height="15" fill="#000080"/>
<rect x="903" y="631" width="1" height="15" fill="#c00000"/>
<rect x="825" y="631" width="1" height="15" fill="#c00000"/>
</svg>
<div id="labels" style="position:absolute;left:0;top:0;width:1130px;height:650px;will-change:transform;">
<span class="t " style="left:28px;top:1.5px;color:#c0c0c0;">分时</span>
<span class="t " style="left:61px;top:1.5px;color:#c0c0c0;">1分钟</span>
<span class="t " style="left:99.5px;top:1.5px;color:#c0c0c0;">5分钟</span>
<span class="t " style="left:139px;top:1.5px;color:#c0c0c0;">15分钟</span>
<span class="t " style="left:185px;top:1.5px;color:#c0c0c0;">30分钟</span>
<span class="t " style="left:230px;top:1.5px;color:#c0c0c0;">60分钟</span>
<span class="t " style="left:278px;top:1.5px;color:#54ffff;">日线</span>
<span class="t " style="left:312px;top:1.5px;color:#c0c0c0;">周线</span>
<span class="t " style="left:345px;top:1.5px;color:#c0c0c0;">月线</span>
<span class="t " style="left:378px;top:1.5px;color:#c0c0c0;">多周期</span>
<span class="t " style="left:422.5px;top:1.5px;color:#c0c0c0;">更多</span>
<span class="t " style="left:450px;top:1.5px;color:#c0c0c0;">&gt;</span>
<span class="t " style="left:816px;top:1.5px;color:#c0c0c0;">复权</span>
<span class="t " style="left:850px;top:1.5px;color:#c0c0c0;">叠加</span>
<span class="t " style="left:885px;top:1.5px;color:#c0c0c0;">多股</span>
<span class="t " style="left:920px;top:1.5px;color:#c0c0c0;">统计</span>
<span class="t " style="left:955px;top:1.5px;color:#c0c0c0;">画线</span>
<span class="t " style="left:992.5px;top:1.5px;color:#c0c0c0;">F10</span>
<span class="t " style="left:1025px;top:1.5px;color:#c0c0c0;">标记</span>
<span class="t " style="left:1057px;top:1.5px;color:#c0c0c0;">+自选</span>
<span class="t " style="left:1096px;top:1.5px;color:#c0c0c0;">返回</span>
<span class="t " style="left:3px;top:21.5px;color:#c0c0c0;letter-spacing:0.1px;">吉大正元(日线.前复权)</span>
<span class="t " style="left:17.5px;top:398px;color:#c0c0c0;">股朋指标网</span>
<span class="t " style="left:82px;top:398px;color:#ffffff;word-spacing:1.3px;">异形J: -1.16</span>
<span class="t " style="left:151px;top:398px;color:#ffff00;word-spacing:1.3px;">异形K: 68.37</span>
<span class="t " style="left:225px;top:398px;color:#ff0000;word-spacing:1.3px;">异形D: 188.31</span>
<span class="t " style="left:307px;top:398px;color:#00ff00;word-spacing:1.5px;letter-spacing:0.1px;">老鼠突破: 500.00</span>
<span class="t " style="left:404px;top:398px;color:#c0c0c0;word-spacing:1.3px;">缓冲: 800.00</span>
<span class="t " style="left:477px;top:398px;color:#ff0a6c;word-spacing:1.3px;">逃顶: 1300.00</span>
<span class="t " style="right:9.5px;top:44px;color:#ff3232;">36.00</span>
<span class="t " style="right:9.5px;top:83px;color:#ff3232;">34.00</span>
<span class="t " style="right:9.5px;top:122px;color:#ff3232;">32.00</span>
<span class="t " style="right:9.5px;top:161px;color:#ff3232;">30.00</span>
<span class="t " style="right:9.5px;top:200px;color:#ff3232;">28.00</span>
<span class="t " style="right:9.5px;top:239px;color:#ff3232;">26.00</span>
<span class="t " style="right:9.5px;top:278px;color:#ff3232;">24.00</span>
<span class="t " style="right:9.5px;top:317px;color:#ff3232;">22.00</span>
<span class="t " style="right:9.5px;top:355px;color:#ff3232;">20.00</span>
<span class="t " style="left:1077px;top:255.5px;color:#dcdcdc;">24.64</span>
<span class="t " style="right:9px;top:441px;color:#ff3232;">1500</span>
<span class="t " style="right:9px;top:471px;color:#ff3232;">1250</span>
<span class="t " style="right:9px;top:499px;color:#ff3232;">1000</span>
<span class="t " style="right:9px;top:530px;color:#ff3232;">750.0</span>
<span class="t " style="right:9px;top:558px;color:#ff3232;">500.0</span>
<span class="t " style="left:379px;top:38.5px;color:#c0c0c0;">36.50</span>
<span class="t " style="left:107px;top:372px;color:#c0c0c0;">19.19</span>
<span class="t " style="left:3.5px;top:631.5px;color:#ff3232;">2025年</span>
<span class="t " style="left:108px;top:631.5px;color:#ff3232;">5</span>
<span class="t " style="left:240px;top:631.5px;color:#ff3232;">6</span>
<span class="t " style="left:378.5px;top:631.5px;color:#ff3232;">7</span>
<span class="t " style="left:538px;top:631.5px;color:#ff3232;">8</span>
<span class="t " style="left:684px;top:631.5px;color:#ff3232;">9</span>
<span class="t " style="left:955px;top:631.5px;color:#ff3232;">11</span>
<span class="t " style="left:826.8px;top:630.5px;color:#c0c0c0;letter-spacing:0.08px;">2025/09/30/二</span>
<span class="tag" style="left:370px;top:382px;background:#008000">跌</span>
<span class="tag" style="left:391px;top:382px;background:#008080">解</span>
<span class="tag" style="left:426px;top:382px;background:#804000">榜</span>
<span class="tag" style="left:767px;top:382px;background:#008000">减</span>
<span class="tag" style="left:877px;top:382px;background:#8b0000">涨</span>
<span class="tag" style="left:918px;top:382px;background:#003070">财</span>
<div class="wm"><b>股朋指标网</b><i>www.7gpzb.com</i></div>
</div>
</body></html>
